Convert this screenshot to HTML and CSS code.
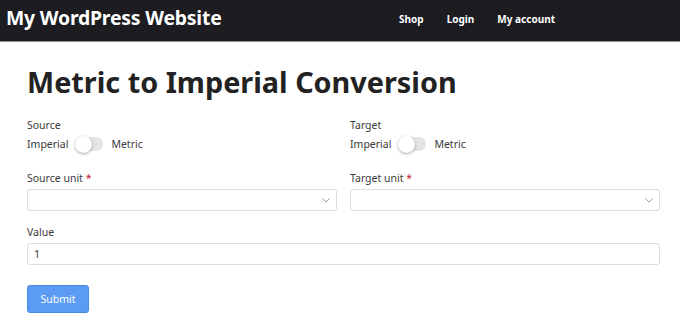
FILE: index.html
```html
<!DOCTYPE html>
<html lang="en">
<head>
    <meta charset="UTF-8">
    <meta name="viewport" content="width=device-width, initial-scale=1.0">
    <title>Metric to Imperial Conversion</title>
    <link rel="stylesheet" href="styles.css">
</head>
<body>
    <div id="site-header">
        <div id="site-title">My WordPress Website</div>
        <nav id="site-nav">
            <a href="#">Shop</a>
            <a href="#">Login</a>
            <a href="#">My account</a>
        </nav>
    </div>

    <div id="page-content">
        <h1 class="page-title">Metric to Imperial Conversion</h1>

        <form id="convert-form">
            <div class="form-row switch-row">
                <div class="form-col">
                    <div class="field-label">Source</div>
                    <div class="toggle-row">
                        <span>Imperial</span>
                        <span class="toggle"><span class="toggle-knob"></span></span>
                        <span>Metric</span>
                    </div>
                </div>
                <div class="form-col">
                    <div class="field-label">Target</div>
                    <div class="toggle-row">
                        <span>Imperial</span>
                        <span class="toggle"><span class="toggle-knob"></span></span>
                        <span>Metric</span>
                    </div>
                </div>
            </div>

            <div class="form-row">
                <div class="form-col">
                    <div class="field-label">Source unit <span class="required">*</span></div>
                    <div class="select-box">
                        <svg width="8" height="5" viewBox="0 0 8 5"><path d="M0.5 0.5 L4 4 L7.5 0.5" fill="none" stroke="#999" stroke-width="1"/></svg>
                    </div>
                </div>
                <div class="form-col">
                    <div class="field-label">Target unit <span class="required">*</span></div>
                    <div class="select-box">
                        <svg width="8" height="5" viewBox="0 0 8 5"><path d="M0.5 0.5 L4 4 L7.5 0.5" fill="none" stroke="#999" stroke-width="1"/></svg>
                    </div>
                </div>
            </div>

            <div class="form-row">
                <div class="form-col">
                    <div class="field-label">Value</div>
                    <input type="text" id="value-input" value="1">
                </div>
            </div>

            <button type="button" id="submit-button">Submit</button>
        </form>
    </div>
</body>
</html>
```

FILE: styles.css
```css
body, html {
    margin: 0;
    font-family: "Noto Sans", "Open Sans", sans-serif;
    background-color: #fff;
}
#site-header {
    display: flex;
    align-items: center;
    justify-content: space-between;
    height: 41px;
    background-color: #1c1c21;
    border-bottom: 1px solid #8c8c8c;
    padding: 0 0 0 6px;
}
#site-title {
    color: #fff;
    font-size: 19.4px;
    font-weight: bold;
    letter-spacing: -0.2px;
    padding-bottom: 7px;
}
#site-nav {
    display: flex;
    gap: 23px;
    padding-right: 125px;
    padding-bottom: 4px;
}
#site-nav a {
    color: #fff;
    font-size: 10px;
    font-weight: bold;
    text-decoration: none;
}
#page-content {
    padding: 21px 20px 0 27px;
}
.page-title {
    margin: 0 0 16px 0;
    font-size: 28.8px;
    line-height: 38px;
    color: #222;
    font-weight: bold;
}
.form-row {
    display: flex;
    gap: 13px;
    margin-bottom: 13px;
}
.switch-row {
    margin-bottom: 17px;
}
.form-col {
    flex: 1;
    display: flex;
    flex-direction: column;
}
.field-label {
    font-size: 10.5px;
    line-height: 16px;
    color: #3a3a3a;
    margin-bottom: 3px;
}
.required {
    color: #c8202a;
}
.toggle-row {
    display: flex;
    align-items: center;
    gap: 8px;
    font-size: 10.5px;
    line-height: 16px;
    color: #3a3a3a;
    height: 18px;
    margin-top: -1px;
}
.toggle {
    display: flex;
    align-items: center;
    width: 27px;
    height: 14px;
    border-radius: 7px;
    background-color: #e4e4e4;
}
.toggle-knob {
    width: 17px;
    height: 17px;
    border-radius: 50%;
    background-color: #fff;
    box-shadow: 0 1px 3px rgba(0, 0, 0, 0.35);
    margin-left: -1px;
}
.select-box {
    height: 20px;
    border: 1px solid #dcdcdc;
    border-radius: 3px;
    display: flex;
    align-items: center;
    justify-content: flex-end;
    padding-right: 6px;
}
#value-input {
    height: 20px;
    border: 1px solid #dcdcdc;
    border-radius: 3px;
    padding: 0 6px;
    font-family: "Noto Sans", sans-serif;
    font-size: 10.5px;
    color: #333;
    box-sizing: content-box;
    margin: 0;
}
#submit-button {
    margin-top: 7px;
    width: 62px;
    height: 28px;
    background-color: #5b9bf3;
    color: #fff;
    border: 1px solid #4a8ae4;
    border-radius: 3px;
    font-family: "Noto Sans", sans-serif;
    font-size: 10.5px;
    cursor: pointer;
}
```
